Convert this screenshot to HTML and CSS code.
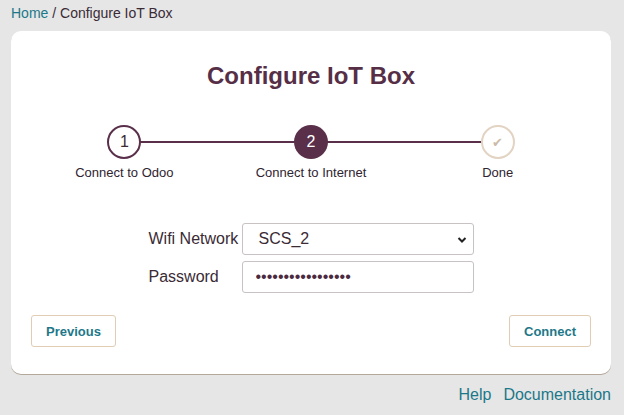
FILE: index.html
```html
<!DOCTYPE html>
<html>
<head>
<meta charset="utf-8">
<link rel="stylesheet" href="styles.css">
</head>
<body>
<div class="crumbs"><a class="link" href="#">Home</a> / Configure IoT Box</div>
<div class="card">
  <h1 class="title">Configure IoT Box</h1>
  <div class="steps">
    <div class="track"></div>
    <div class="step">
      <div class="dot dot-done">1</div>
      <div class="step-label">Connect to Odoo</div>
    </div>
    <div class="step">
      <div class="dot dot-active">2</div>
      <div class="step-label">Connect to Internet</div>
    </div>
    <div class="step">
      <div class="dot dot-todo">✔</div>
      <div class="step-label">Done</div>
    </div>
  </div>
  <div class="form">
    <label class="form-label">Wifi Network</label>
    <div class="select">SCS_2
      <svg class="chev" width="10" height="8" viewBox="0 0 10 8"><path d="M1.5 2 L5 5.5 L8.5 2" fill="none" stroke="#222" stroke-width="2"/></svg>
    </div>
    <label class="form-label">Password</label>
    <input class="input" type="password" value="aaaaaaaaaaaaaaaaa">
  </div>
  <div class="actions">
    <button class="btn">Previous</button>
    <button class="btn">Connect</button>
  </div>
</div>
<div class="footer"><a class="link" href="#">Help</a><a class="link" href="#">Documentation</a></div>
</body>
</html>
```
FILE: styles.css
```css
* { box-sizing: border-box; }
body {
  margin: 0;
  background: #e6e6e6;
  font-family: "Liberation Sans", Arial, sans-serif;
  color: #3b2a35;
}
.link { color: #1c7889; text-decoration: none; }
.crumbs {
  font-size: 14px;
  line-height: 18px;
  padding: 4px 11px 9px;
  color: #3a2b35;
}
.card {
  margin: 0 13px 0 11px;
  background: #fff;
  border-radius: 10px;
  box-shadow: 0 1px 0 #b3a89a;
  padding: 20px 20px 27px;
}
.title {
  margin: 10px 0 0;
  text-align: center;
  font-size: 24px;
  line-height: 29px;
  font-weight: bold;
  color: #562f47;
}
.steps {
  position: relative;
  display: grid;
  grid-template-columns: repeat(3, 1fr);
  margin-top: 35px;
}
.track {
  position: absolute;
  left: 16.67%;
  right: 16.67%;
  top: 16px;
  height: 2px;
  background: #5a2f4a;
}
.step {
  display: flex;
  flex-direction: column;
  align-items: center;
  position: relative;
}
.dot {
  width: 34px;
  height: 34px;
  border-radius: 50%;
  display: flex;
  align-items: center;
  justify-content: center;
  font-size: 16px;
  background: #fff;
}
.dot-done { border: 2px solid #5a2f4a; color: #3a2b35; }
.dot-active { background: #5a2f4a; color: #fff; }
.dot-todo { border: 2px solid #e2d3c2; color: #cbbba8; font-size: 13px; }
.step-label {
  font-size: 13px;
  line-height: 15px;
  margin-top: 6px;
  color: #2f2430;
}
.form {
  display: grid;
  grid-template-columns: 93px 232px;
  row-gap: 6px;
  justify-content: center;
  align-items: center;
  margin-top: 43px;
}
.form-label { font-size: 16px; color: #3a2b35; }
.select, .input {
  height: 32px;
  border: 1px solid #c8c2c2;
  border-radius: 3px;
  font-family: "Liberation Sans", Arial, sans-serif;
  font-size: 16px;
  color: #3a2b35;
  background: #fff;
}
.select {
  position: relative;
  display: flex;
  align-items: center;
  padding-left: 16px;
}
.chev { position: absolute; right: 6px; top: 12px; }
.input {
  padding: 0 13px;
  outline: none;
  color: #4b2a40;
}
.actions {
  display: flex;
  justify-content: space-between;
  margin-top: 22px;
}
.btn {
  height: 32px;
  padding: 0 14px;
  background: #fff;
  border: 1px solid #e0cdb4;
  border-radius: 3px;
  font-family: "Liberation Sans", Arial, sans-serif;
  font-size: 13px;
  font-weight: bold;
  color: #1e7889;
}
.footer {
  display: flex;
  justify-content: flex-end;
  gap: 12px;
  margin: 12px 13px 0 0;
  font-size: 16px;
  line-height: 18px;
}
```
